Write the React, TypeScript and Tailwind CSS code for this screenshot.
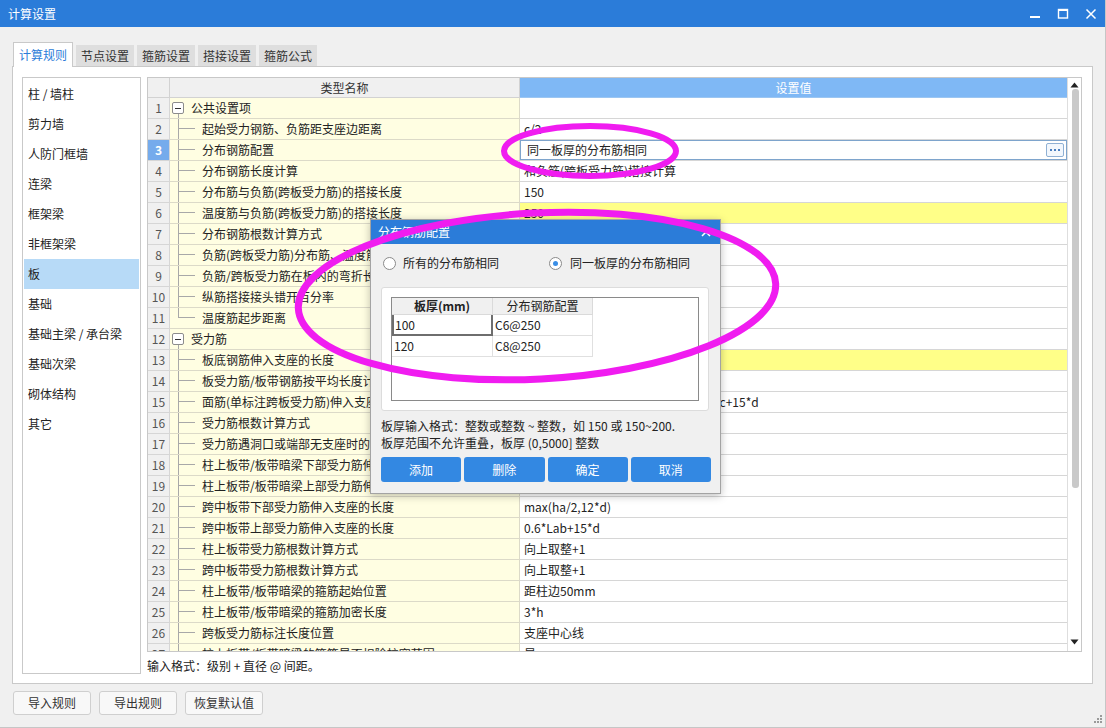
import React from "react";

type Row = {
  name: string;
  value?: string;
  group?: boolean;
  last?: boolean;
  yellow?: boolean;
  active?: boolean;
};

const ROWS: Row[] = [
  { name: "公共设置项", group: true },
  { name: "起始受力钢筋、负筋距支座边距离", value: "c/2" },
  { name: "分布钢筋配置", value: "同一板厚的分布筋相同", active: true },
  { name: "分布钢筋长度计算", value: "和负筋(跨板受力筋)搭接计算" },
  { name: "分布筋与负筋(跨板受力筋)的搭接长度", value: "150" },
  { name: "温度筋与负筋(跨板受力筋)的搭接长度", value: "250", yellow: true },
  { name: "分布钢筋根数计算方式", value: "向下取整+1" },
  { name: "负筋(跨板受力筋)分布筋、温度筋是否计算", value: "是" },
  { name: "负筋/跨板受力筋在板内的弯折长度", value: "板厚-2*保护层" },
  { name: "纵筋搭接接头错开百分率", value: "50%" },
  { name: "温度筋起步距离", value: "s", last: true },
  { name: "受力筋", group: true },
  { name: "板底钢筋伸入支座的长度", value: "max(ha/2,5*d)", yellow: true },
  { name: "板受力筋/板带钢筋按平均长度计算", value: "否" },
  { name: "面筋(单标注跨板受力筋)伸入支座的锚固长度", value: "能直锚就直锚,否则按公式计算:ha-bhc+15*d" },
  { name: "受力筋根数计算方式", value: "向上取整+1" },
  { name: "受力筋遇洞口或端部无支座时的弯折长度", value: "板厚-2*保护层" },
  { name: "柱上板带/板带暗梁下部受力筋伸入支座的长度", value: "ha-bhc+15*d" },
  { name: "柱上板带/板带暗梁上部受力筋伸入支座的长度", value: "0.6*Lab+15*d" },
  { name: "跨中板带下部受力筋伸入支座的长度", value: "max(ha/2,12*d)" },
  { name: "跨中板带上部受力筋伸入支座的长度", value: "0.6*Lab+15*d" },
  { name: "柱上板带受力筋根数计算方式", value: "向上取整+1" },
  { name: "跨中板带受力筋根数计算方式", value: "向上取整+1" },
  { name: "柱上板带/板带暗梁的箍筋起始位置", value: "距柱边50mm" },
  { name: "柱上板带/板带暗梁的箍筋加密长度", value: "3*h" },
  { name: "跨板受力筋标注长度位置", value: "支座中心线" },
  { name: "柱上板带/板带暗梁的箍筋是否扣除柱宽范围", value: "是" },
];

const SIDE = [
  "柱 / 墙柱",
  "剪力墙",
  "人防门框墙",
  "连梁",
  "框架梁",
  "非框架梁",
  "板",
  "基础",
  "基础主梁 / 承台梁",
  "基础次梁",
  "砌体结构",
  "其它",
];

const TABS = ["计算规则", "节点设置", "箍筋设置", "搭接设置", "箍筋公式"];

function TreeCell({ row }: { row: Row }) {
  if (row.group) {
    return (
      <div className="flex h-full">
        <div className="ml-[2px] flex w-[12px] flex-col items-center">
          <div className="h-[4px]" />
          <div className="flex h-[12px] w-[12px] items-center justify-center rounded-[2px] border border-[#8c8c8c] bg-white">
            <div className="h-px w-[6px] bg-[#333]" />
          </div>
          <div className="flex-1 border-l border-[#a8a8a8]" />
        </div>
        <span className="ml-[7px] self-center">{row.name}</span>
      </div>
    );
  }
  return (
    <div className="flex h-full">
      <div className="ml-[8px] flex w-[17px] flex-col">
        <div className="h-[10px] border-b border-l border-[#a8a8a8]" />
        <div className={row.last ? "flex-1" : "flex-1 border-l border-[#a8a8a8]"} />
      </div>
      <span className="ml-[7px] self-center">{row.name}</span>
    </div>
  );
}

function ValueCell({ row }: { row: Row }) {
  if (row.active) {
    return (
      <div className="flex h-full items-center border border-[#7ea4cc] bg-white pl-[6px] pr-[2px]">
        <span className="flex-1">{row.value}</span>
        <div className="flex h-[14px] w-[18px] items-center justify-center gap-[2px] rounded-[2px] border border-[#8fb0d4] bg-[#f2f7fd]">
          <div className="h-[2px] w-[2px] bg-[#4a7fc0]" />
          <div className="h-[2px] w-[2px] bg-[#4a7fc0]" />
          <div className="h-[2px] w-[2px] bg-[#4a7fc0]" />
        </div>
      </div>
    );
  }
  return <div className="h-full pl-[4px] leading-[20px]">{row.value}</div>;
}

function Dialog() {
  return (
    <div className="absolute left-[370px] top-[219px] flex h-[275px] w-[351px] flex-col border border-[#a3a3a3] bg-[#f0f0f0] shadow-[0_2px_8px_rgba(0,0,0,0.25)]">
      <div className="flex h-[24px] items-center justify-between bg-[#2b7cd9] pl-[7px] pr-[9px] text-white">
        <span className="text-[12px]">分布钢筋配置</span>
        <svg width="10" height="10" viewBox="0 0 10 10">
          <path d="M1 1 L9 9 M9 1 L1 9" stroke="white" strokeWidth="1.6" />
        </svg>
      </div>
      <div className="flex flex-col px-[10px]">
        <div className="mt-[12px] flex h-[14px] items-center">
          <div className="flex w-[168px] items-center">
            <div className="ml-[2px] h-[13px] w-[13px] rounded-full border border-[#8a8a8a] bg-white" />
            <span className="ml-[7px] leading-[14px]">所有的分布筋相同</span>
          </div>
          <div className="flex items-center">
            <div className="flex h-[13px] w-[13px] items-center justify-center rounded-full border border-[#8a8a8a] bg-white">
              <div className="h-[5px] w-[5px] rounded-full bg-[#3a8ee6]" />
            </div>
            <span className="ml-[8px] leading-[14px]">同一板厚的分布筋相同</span>
          </div>
        </div>
        <div className="mt-[17px] h-[124px] w-[328px] rounded-[3px] border border-[#dcdcdc] bg-white p-[9px]">
          <div className="flex h-[104px] flex-col border border-[#8a8a8a] bg-white">
            <div className="flex h-[17px]">
              <div className="w-[101px] border-r border-b border-[#dadada] bg-[#f0f0f0] text-center font-bold leading-[16px]">
                板厚(mm)
              </div>
              <div className="w-[100px] border-r border-b border-[#dadada] bg-[#f0f0f0] text-center leading-[16px]">
                分布钢筋配置
              </div>
            </div>
            <div className="flex h-[21px]">
              <div className="w-[101px] border-b-2 border-l-2 border-r-2 border-[#6e6e6e] pl-px leading-[19px]">100</div>
              <div className="w-[100px] border-r border-b border-[#e0e0e0] pl-[2px] leading-[20px]">C6@250</div>
            </div>
            <div className="flex h-[21px]">
              <div className="w-[101px] border-r border-b border-[#e0e0e0] pl-[2px] leading-[20px]">120</div>
              <div className="w-[100px] border-r border-b border-[#e0e0e0] pl-[2px] leading-[20px]">C8@250</div>
            </div>
          </div>
        </div>
        <div className="mt-[6px] leading-[17px]">板厚输入格式：整数或整数 ~ 整数，如 150 或 150~200.</div>
        <div className="leading-[17px]">板厚范围不允许重叠，板厚 (0,5000] 整数</div>
        <div className="mt-[6px] flex w-[330px] gap-[3px]">
          {["添加", "删除", "确定", "取消"].map((t) => (
            <div
              key={t}
              className="flex h-[25px] flex-1 items-center justify-center rounded-[3px] bg-[#3388e2] text-white"
            >
              {t}
            </div>
          ))}
        </div>
      </div>
    </div>
  );
}

export default function App() {
  return (
    <div className="relative flex h-[728px] w-[1106px] flex-col overflow-hidden border-b border-r border-[#c6c6c6] bg-[#f0f0f0] font-['Microsoft_YaHei','Noto_Sans_CJK_SC',sans-serif] text-[12px] text-[#222]">
      {/* title bar */}
      <div className="flex h-[27px] shrink-0 items-center justify-between bg-[#2b7cd9] pl-[8px] text-white">
        <span className="text-[12px]">计算设置</span>
        <div className="flex h-full">
          <div className="flex w-[28px] items-center justify-center">
            <svg width="12" height="12" viewBox="0 0 12 12">
              <rect x="1" y="8" width="10" height="2" fill="white" />
            </svg>
          </div>
          <div className="flex w-[28px] items-center justify-center">
            <svg width="12" height="12" viewBox="0 0 12 12">
              <rect x="1.5" y="1.5" width="9" height="8.5" fill="none" stroke="white" strokeWidth="1.4" />
              <rect x="1" y="1" width="10" height="2" fill="white" />
            </svg>
          </div>
          <div className="flex w-[28px] items-center justify-center">
            <svg width="12" height="12" viewBox="0 0 12 12">
              <path d="M1.5 1.5 L10.5 10.5 M10.5 1.5 L1.5 10.5" stroke="white" strokeWidth="1.5" />
            </svg>
          </div>
        </div>
      </div>

      {/* tabs */}
      <div className="relative z-10 -mb-px mt-[15px] flex h-[25px] items-end gap-[3px] pl-[13px]">
        {TABS.map((t, i) =>
          i === 0 ? (
            <div
              key={t}
              className="flex h-[25px] w-[60px] items-center justify-center border border-b-0 border-[#c9c9c9] bg-white text-[12px] text-[#2b7cd9]"
            >
              {t}
            </div>
          ) : (
            <div
              key={t}
              className="mb-px flex h-[21px] w-[58px] items-center justify-center bg-[#dedede] text-[12px] text-[#333]"
            >
              {t}
            </div>
          )
        )}
      </div>

      {/* main panel */}
      <div className="mx-[12px] flex h-[618px] shrink-0 border border-[#c9c9c9] bg-white pb-[9px] pl-[9px] pr-[10px] pt-[10px]">
        <div className="flex w-[120px] flex-col border border-[#c9c9c9] px-px pt-px">
          {SIDE.map((s) => (
            <div
              key={s}
              className={`flex h-[30px] items-center pl-[4px] ${s === "板" ? "bg-[#b7daf7]" : ""}`}
            >
              {s}
            </div>
          ))}
        </div>

        <div className="ml-[6px] flex flex-1 flex-col">
          <div className="flex h-[575px] border border-[#c8c8c8] overflow-hidden">
            <div className="flex w-[919px] flex-col overflow-hidden">
              <div className="flex h-[20px] shrink-0">
                <div className="w-[22px] border-r border-b border-[#d2d2d2] bg-[#f0f0f0]" />
                <div className="w-[350px] border-r border-b border-[#d2d2d2] bg-[#f0f0f0] text-center leading-[19px] text-[#333]">
                  类型名称
                </div>
                <div className="flex-1 border-b border-[#9cc6f2] bg-[#7fb8f5] text-center leading-[19px] text-white">
                  设置值
                </div>
              </div>
              {ROWS.map((row, i) => (
                <div key={i} className="flex h-[21px] shrink-0">
                  <div
                    className={`w-[22px] border-r border-b border-[#d6d6d6] text-center leading-[20px] ${
                      row.active ? "bg-[#75abec] font-bold text-white" : "bg-[#f0f0f0] text-[#555]"
                    }`}
                  >
                    {i + 1}
                  </div>
                  <div className="w-[350px] overflow-hidden whitespace-nowrap border-r border-b border-[#dcdac8] bg-[#fffee2]">
                    <TreeCell row={row} />
                  </div>
                  <div
                    className={`flex-1 overflow-hidden whitespace-nowrap border-b border-[#d6d6d6] ${
                      row.yellow ? "bg-[#ffff88]" : "bg-white"
                    }`}
                  >
                    <ValueCell row={row} />
                  </div>
                </div>
              ))}
            </div>
            {/* scrollbar */}
            <div className="flex w-[14px] flex-col border-l border-[#dedede] bg-white">
              <div className="flex h-[10px] items-end justify-center">
                <svg width="9" height="6" viewBox="0 0 9 6">
                  <path d="M0.5 5.5 L4.5 0.5 L8.5 5.5 Z" fill="#222" />
                </svg>
              </div>
              <div className="ml-[4px] mt-px h-[399px] w-[7px] rounded-[3px] bg-[#c9c9c9]" />
              <div className="flex-1" />
              <div className="flex h-[12px] items-start justify-center">
                <svg width="9" height="6" viewBox="0 0 9 6">
                  <path d="M0.5 0.5 L8.5 0.5 L4.5 5.5 Z" fill="#222" />
                </svg>
              </div>
            </div>
          </div>
          <div className="mt-[6px] leading-[16px]">输入格式：级别 + 直径 @ 间距。</div>
        </div>
      </div>

      {/* bottom buttons */}
      <div className="mt-[7px] flex gap-[8px] pl-[13px]">
        {["导入规则", "导出规则", "恢复默认值"].map((b) => (
          <div
            key={b}
            className="flex h-[24px] w-[78px] items-center justify-center rounded-[3px] border border-[#cfcfcf] bg-[#f8f8f8] text-[#333]"
          >
            {b}
          </div>
        ))}
      </div>

      <Dialog />

      {/* resize grip */}
      <svg className="absolute bottom-[3px] right-[2px]" width="10" height="10" viewBox="0 0 10 10">
        <rect x="7" y="1" width="2" height="2" fill="#9a9a9a" />
        <rect x="4" y="4" width="2" height="2" fill="#9a9a9a" />
        <rect x="7" y="4" width="2" height="2" fill="#9a9a9a" />
        <rect x="1" y="7" width="2" height="2" fill="#9a9a9a" />
        <rect x="4" y="7" width="2" height="2" fill="#9a9a9a" />
        <rect x="7" y="7" width="2" height="2" fill="#9a9a9a" />
      </svg>

      {/* annotation marks */}
      <svg
        className="pointer-events-none absolute left-0 top-0"
        width="1106"
        height="728"
        viewBox="0 0 1106 728"
      >
        <ellipse cx="590" cy="151" rx="86" ry="25" fill="none" stroke="#f01cf0" strokeWidth="6" />
        <ellipse
          cx="537"
          cy="296"
          rx="239"
          ry="83"
          fill="none"
          stroke="#f01cf0"
          strokeWidth="7"
          transform="rotate(-3 537 296)"
        />
      </svg>
    </div>
  );
}
